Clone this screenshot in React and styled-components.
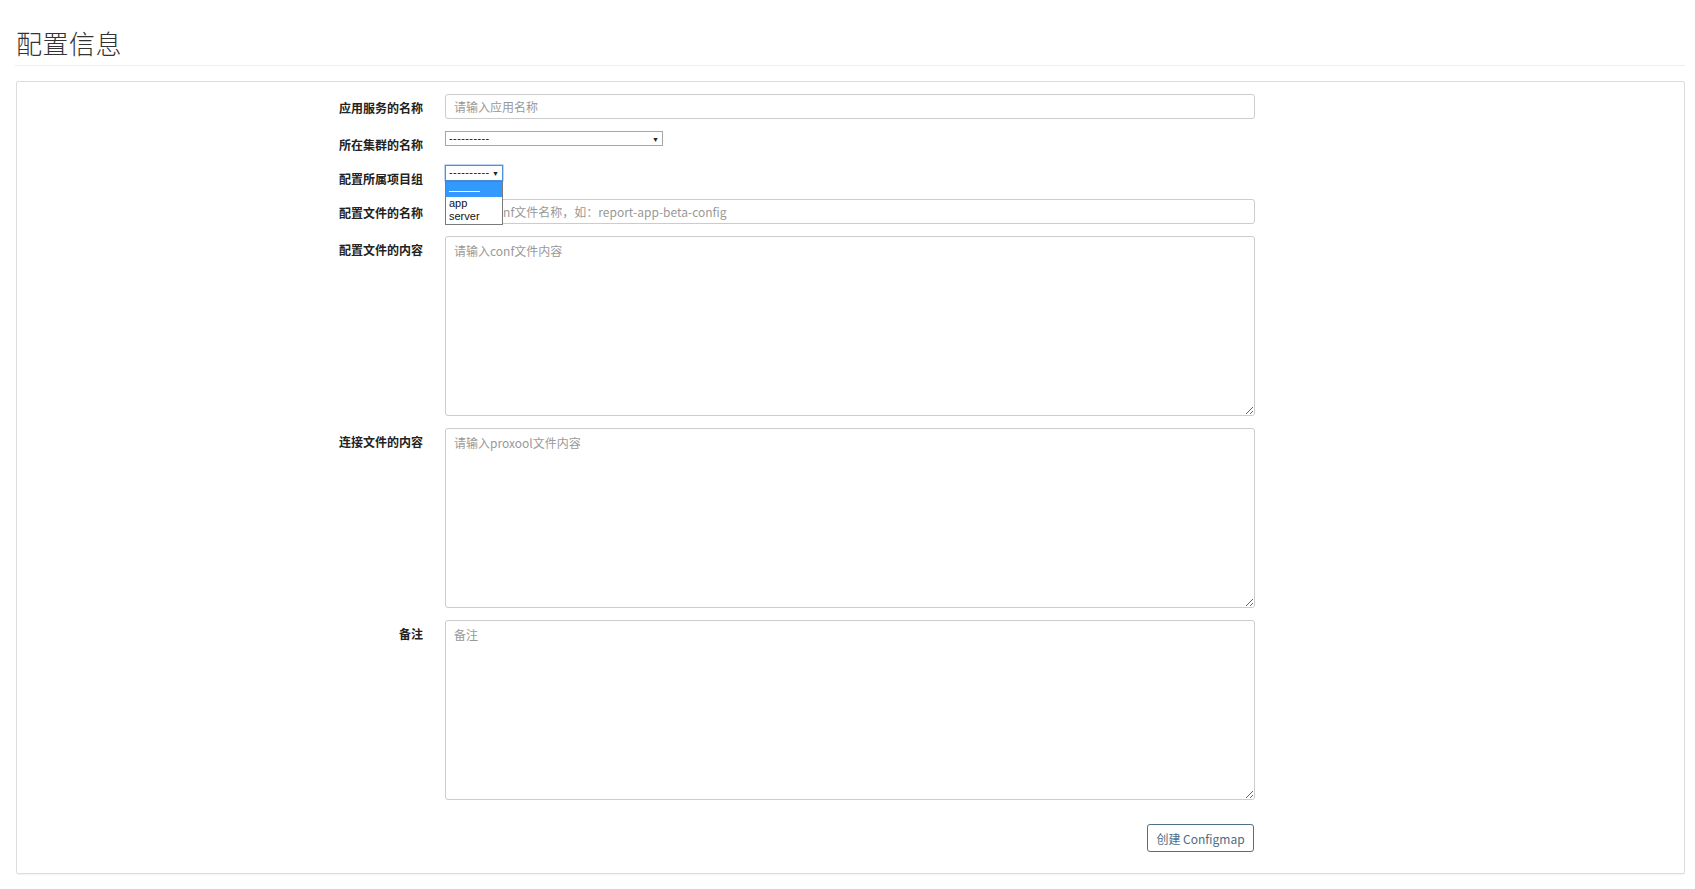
import React from 'react';
import styled, { createGlobalStyle } from 'styled-components';

const GlobalStyle = createGlobalStyle`
  html, body {
    margin: 0;
    padding: 0;
    background: #fff;
  }
  body {
    font-family: "Liberation Sans", "Noto Sans CJK SC", Arial, sans-serif;
    font-size: 12px;
    color: #333;
  }
  * {
    box-sizing: border-box;
  }
`;

const Page = styled.div`
  padding: 0 10px 16px 16px;
`;

const PageHeader = styled.div`
  padding: 28px 0 7px 0;
  margin-left: -1px;
  border-bottom: 1px solid #eee;
`;

const Title = styled.h1`
  margin: 0 0 0 1px;
  font-family: "Noto Sans CJK SC", "Liberation Sans", sans-serif;
  font-weight: 300;
  font-size: 26px;
  line-height: 30px;
  color: #333;
  letter-spacing: 0.5px;
`;

const Panel = styled.div`
  margin-top: 15px;
  border: 1px solid #ddd;
  border-radius: 2px;
  box-shadow: 0 1px 1px rgba(0, 0, 0, 0.05);
  padding: 12px 0 21px 0;
`;

const Form = styled.form`
  display: grid;
  grid-template-columns: 406px 810px;
  column-gap: 22px;
  row-gap: 12px;
`;

const Label = styled.label`
  font-family: "Noto Sans CJK SC", "Liberation Sans", sans-serif;
  font-weight: 700;
  font-size: 12px;
  line-height: 17px;
  padding-top: 5px;
  text-align: right;
  color: #222;
`;

const Field = styled.div`
  position: relative;
  display: flex;
  align-items: flex-start;
`;

const TextInput = styled.input`
  width: 100%;
  height: 25px;
  padding: 0 8px;
  border: 1px solid #ccc;
  border-radius: 3px;
  font-family: "Noto Sans CJK SC", "Liberation Sans", sans-serif;
  font-size: 12px;
  color: #555;
  outline: none;
  &::placeholder {
    color: #999;
  }
`;

const TextArea = styled.textarea`
  width: 100%;
  height: 180px;
  padding: 5px 8px;
  border: 1px solid #ccc;
  border-radius: 3px;
  font-family: "Noto Sans CJK SC", "Liberation Sans", sans-serif;
  font-size: 12px;
  line-height: 17px;
  color: #555;
  resize: vertical;
  outline: none;
  display: block;
  &::placeholder {
    color: #999;
  }
`;

const SelectBox = styled.div`
  width: ${({ width }) => width}px;
  height: ${({ focused }) => (focused ? 16 : 15)}px;
  border: 1px solid ${({ focused }) => (focused ? '#4d90d8' : '#a6a6a6')};
  box-shadow: ${({ focused }) => (focused ? '0 0 0 0.5px #7fb2e8' : 'none')};
  background: #fff;
  display: flex;
  align-items: center;
  justify-content: space-between;
  padding: 0 3px 0 3px;
  font-family: "Liberation Sans", Arial, sans-serif;
  font-size: 11px;
  line-height: 1;
  color: #111;
`;

const Dashes = styled.span`
  letter-spacing: 0.4px;
  margin-top: -1px;
`;

const Caret = styled.span`
  font-size: 7px;
  color: #222;
  margin-top: 1px;
`;

const DropList = styled.ul`
  position: absolute;
  top: 16px;
  left: 0;
  width: 58px;
  margin: 0;
  padding: 0 0 1px 0;
  list-style: none;
  background: #fff;
  border: 1px solid #7a7a7a;
  z-index: 5;
`;

const Option = styled.li`
  height: ${({ active }) => (active ? 15 : 13)}px;
  padding: 0 3px;
  display: flex;
  align-items: center;
  background: ${({ active }) => (active ? '#3399ff' : '#fff')};
  color: ${({ active }) => (active ? '#fff' : '#111')};
  font-family: "Liberation Sans", Arial, sans-serif;
  font-size: 11px;
  line-height: 13px;
`;

const OptionLine = styled.span`
  display: block;
  width: 31px;
  height: 1px;
  background: #fff;
  margin-top: 4px;
`;

const Actions = styled.div`
  grid-column: 2;
  display: flex;
  justify-content: flex-end;
  padding-top: 12px;
`;

const Button = styled.button`
  height: 28px;
  width: 107px;
  margin-right: 1px;
  border: 1px solid #4f6f85;
  border-radius: 3px;
  background: #fff;
  color: #4d6d86;
  font-family: "Noto Sans CJK SC", "Liberation Sans", sans-serif;
  font-size: 12px;
  padding: 0 8px;
  cursor: pointer;
`;

const Select = ({ width, focused }) => (
  <SelectBox width={width} focused={focused}>
    <Dashes>----------</Dashes>
    <Caret>▼</Caret>
  </SelectBox>
);

export default function App() {
  return (
    <Page>
      <GlobalStyle />
      <PageHeader>
        <Title>配置信息</Title>
      </PageHeader>
      <Panel>
        <Form onSubmit={(e) => e.preventDefault()}>
          <Label>应用服务的名称</Label>
          <Field>
            <TextInput placeholder="请输入应用名称" />
          </Field>

          <Label>所在集群的名称</Label>
          <Field>
            <Select width={218} />
          </Field>

          <Label>配置所属项目组</Label>
          <Field>
            <Select width={58} focused />
            <DropList>
              <Option active>
                <OptionLine />
              </Option>
              <Option>app</Option>
              <Option>server</Option>
            </DropList>
          </Field>

          <Label>配置文件的名称</Label>
          <Field>
            <TextInput placeholder="请输入conf文件名称，如：report-app-beta-config" />
          </Field>

          <Label>配置文件的内容</Label>
          <Field>
            <TextArea placeholder="请输入conf文件内容" />
          </Field>

          <Label>连接文件的内容</Label>
          <Field>
            <TextArea placeholder="请输入proxool文件内容" />
          </Field>

          <Label>备注</Label>
          <Field>
            <TextArea placeholder="备注" />
          </Field>

          <Actions>
            <Button type="submit">创建 Configmap</Button>
          </Actions>
        </Form>
      </Panel>
    </Page>
  );
}
